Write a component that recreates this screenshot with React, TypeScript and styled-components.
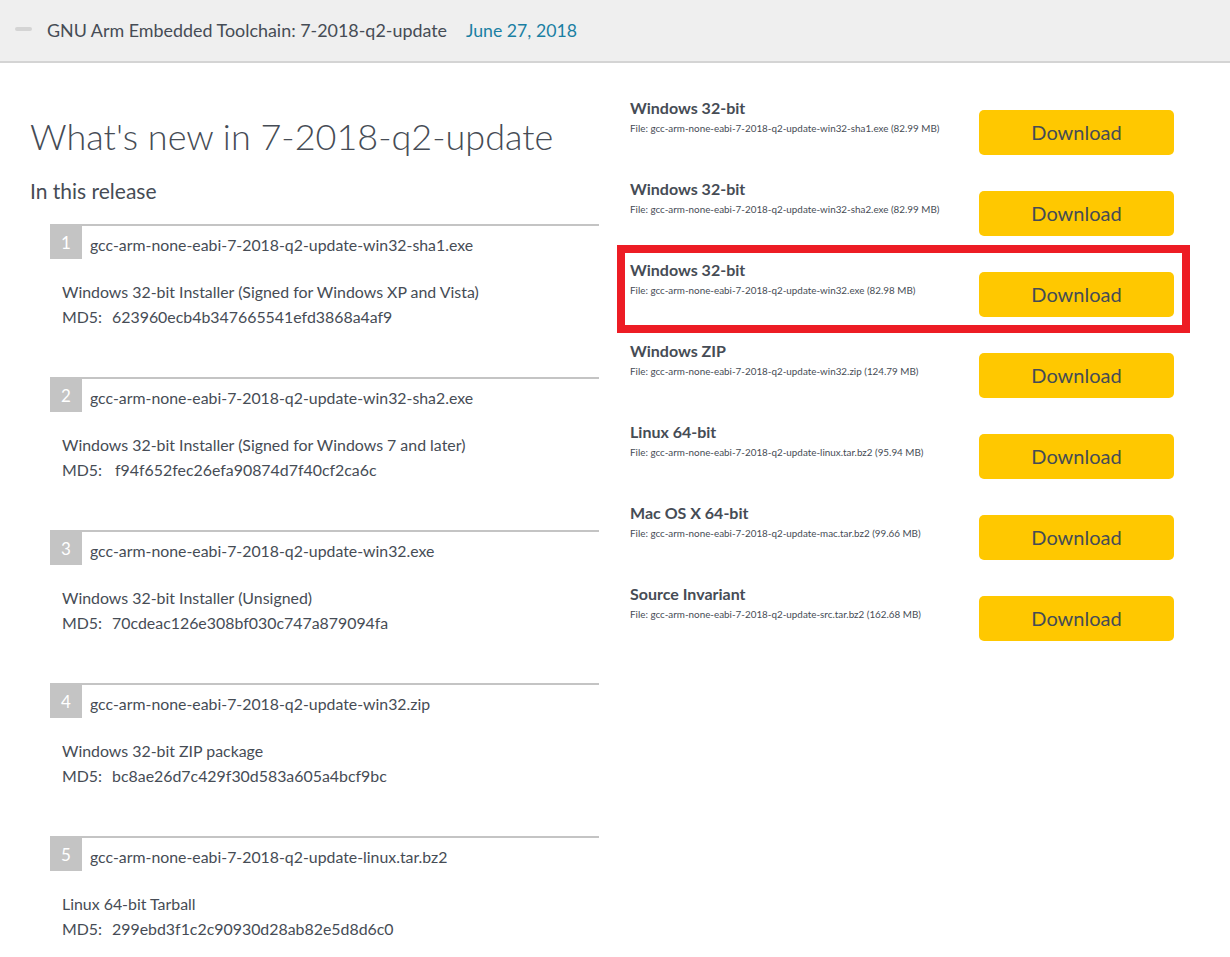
import * as React from 'react';
import styled, { createGlobalStyle } from 'styled-components';

const GlobalStyle = createGlobalStyle`
  html, body {
    margin: 0;
    padding: 0;
    background: #fff;
    overflow: hidden;
  }
  body {
    font-family: Lato, "Liberation Sans", sans-serif;
    color: #464c55;
  }
`;

const Page = styled.div`
  width: 1230px;
  height: 957px;
  overflow: hidden;
`;

const Header = styled.header`
  height: 60px;
  padding: 0 0 1px 15px;
  background: #efefef;
  border-bottom: 2px solid #d4d4d4;
  display: flex;
  align-items: center;
  box-sizing: content-box;
`;

const Dash = styled.span`
  width: 17px;
  height: 4px;
  border-radius: 2px;
  background: #d4d4d4;
  margin: 0 15px 2px 0;
`;

const HeaderTitle = styled.span`
  font-size: 17.9px;
  color: #464c55;
`;

const HeaderDate = styled.span`
  font-size: 17.7px;
  color: #1a7fa3;
  margin-left: 19px;
`;

const Content = styled.main`
  display: flex;
  align-items: flex-start;
`;

const LeftColumn = styled.section`
  width: 569px;
  margin-left: 30px;
  padding-top: 48px;
`;

const Title = styled.h1`
  margin: 0;
  font-size: 36px;
  line-height: 50px;
  font-weight: 300;
  color: #464c55;
`;

const SubTitle = styled.h2`
  margin: 16px 0 0;
  font-size: 21px;
  line-height: 28px;
  font-weight: 400;
  color: #464c55;
`;

const ReleaseList = styled.ol`
  list-style: none;
  margin: 19px 0 0 20px;
  padding: 0;
`;

const ReleaseItem = styled.li`
  height: 153px;
  border-top: 2px solid #c4c4c4;
  box-sizing: border-box;
`;

const ItemHead = styled.div`
  display: flex;
  align-items: flex-start;
  height: 34px;
  margin-top: -1px;
`;

const ItemNumber = styled.span`
  width: 32px;
  height: 34px;
  background: #c4c4c4;
  color: #fff;
  font-size: 17px;
  line-height: 36px;
  text-align: center;
`;

const ItemFile = styled.span`
  margin-left: 8px;
  font-size: 15.85px;
  line-height: 40px;
  color: #464c55;
`;

const ItemBody = styled.div`
  margin: 20px 0 0 12px;
  font-size: 15.9px;
  line-height: 25px;
  color: #464c55;
`;

const Md5 = styled.div<{ $shift?: boolean }>`
  display: flex;
  gap: ${(props) => (props.$shift ? '13px' : '10px')};
`;

const RightColumn = styled.section`
  width: 544px;
  margin-left: 31px;
  padding-top: 28px;
`;

const DownloadRow = styled.div<{ $marked?: boolean }>`
  position: relative;
  height: 81px;
  display: flex;
  justify-content: space-between;

  ${(props) =>
    props.$marked &&
    `
    &::after {
      content: '';
      position: absolute;
      left: -13px;
      right: -16px;
      top: -8px;
      bottom: 1px;
      border: 8px solid #ed1c24;
      pointer-events: none;
    }
  `}
`;

const DownloadInfo = styled.div`
  padding-top: 7px;
`;

const DownloadName = styled.div`
  font-size: 16px;
  line-height: 20px;
  font-weight: 700;
  color: #464c55;
`;

const DownloadFile = styled.div`
  font-size: 9.85px;
  line-height: 20px;
  color: #464c55;
`;

const DownloadButton = styled.button`
  width: 195px;
  height: 45px;
  margin-top: 19px;
  border: none;
  border-radius: 5px;
  background: #ffc800;
  color: #464c55;
  font-family: inherit;
  font-size: 20px;
  padding: 0 0 2px;
`;

const releases = [
  { file: 'gcc-arm-none-eabi-7-2018-q2-update-win32-sha1.exe', desc: 'Windows 32-bit Installer (Signed for Windows XP and Vista)', md5: '623960ecb4b347665541efd3868a4af9' },
  { file: 'gcc-arm-none-eabi-7-2018-q2-update-win32-sha2.exe', desc: 'Windows 32-bit Installer (Signed for Windows 7 and later)', md5: 'f94f652fec26efa90874d7f40cf2ca6c', shift: true },
  { file: 'gcc-arm-none-eabi-7-2018-q2-update-win32.exe', desc: 'Windows 32-bit Installer (Unsigned)', md5: '70cdeac126e308bf030c747a879094fa' },
  { file: 'gcc-arm-none-eabi-7-2018-q2-update-win32.zip', desc: 'Windows 32-bit ZIP package', md5: 'bc8ae26d7c429f30d583a605a4bcf9bc' },
  { file: 'gcc-arm-none-eabi-7-2018-q2-update-linux.tar.bz2', desc: 'Linux 64-bit Tarball', md5: '299ebd3f1c2c90930d28ab82e5d8d6c0' }
];

const downloads = [
  { name: 'Windows 32-bit', file: 'gcc-arm-none-eabi-7-2018-q2-update-win32-sha1.exe (82.99 MB)' },
  { name: 'Windows 32-bit', file: 'gcc-arm-none-eabi-7-2018-q2-update-win32-sha2.exe (82.99 MB)' },
  { name: 'Windows 32-bit', file: 'gcc-arm-none-eabi-7-2018-q2-update-win32.exe (82.98 MB)', marked: true },
  { name: 'Windows ZIP', file: 'gcc-arm-none-eabi-7-2018-q2-update-win32.zip (124.79 MB)' },
  { name: 'Linux 64-bit', file: 'gcc-arm-none-eabi-7-2018-q2-update-linux.tar.bz2 (95.94 MB)' },
  { name: 'Mac OS X 64-bit', file: 'gcc-arm-none-eabi-7-2018-q2-update-mac.tar.bz2 (99.66 MB)' },
  { name: 'Source Invariant', file: 'gcc-arm-none-eabi-7-2018-q2-update-src.tar.bz2 (162.68 MB)' }
];

const App: React.FC = () => (
  <Page>
    <GlobalStyle />
    <Header>
      <Dash />
      <HeaderTitle>GNU Arm Embedded Toolchain: 7-2018-q2-update</HeaderTitle>
      <HeaderDate>June 27, 2018</HeaderDate>
    </Header>
    <Content>
      <LeftColumn>
        <Title>What's new in 7-2018-q2-update</Title>
        <SubTitle>In this release</SubTitle>
        <ReleaseList>
          {releases.map((item, i) => (
            <ReleaseItem key={item.file}>
              <ItemHead>
                <ItemNumber>{i + 1}</ItemNumber>
                <ItemFile>{item.file}</ItemFile>
              </ItemHead>
              <ItemBody>
                <div>{item.desc}</div>
                <Md5 $shift={item.shift}>
                  <span>MD5:</span>
                  <span>{item.md5}</span>
                </Md5>
              </ItemBody>
            </ReleaseItem>
          ))}
        </ReleaseList>
      </LeftColumn>
      <RightColumn>
        {downloads.map((row) => (
          <DownloadRow key={row.file} $marked={row.marked}>
            <DownloadInfo>
              <DownloadName>{row.name}</DownloadName>
              <DownloadFile>File: {row.file}</DownloadFile>
            </DownloadInfo>
            <DownloadButton>Download</DownloadButton>
          </DownloadRow>
        ))}
      </RightColumn>
    </Content>
  </Page>
);

export default App;
